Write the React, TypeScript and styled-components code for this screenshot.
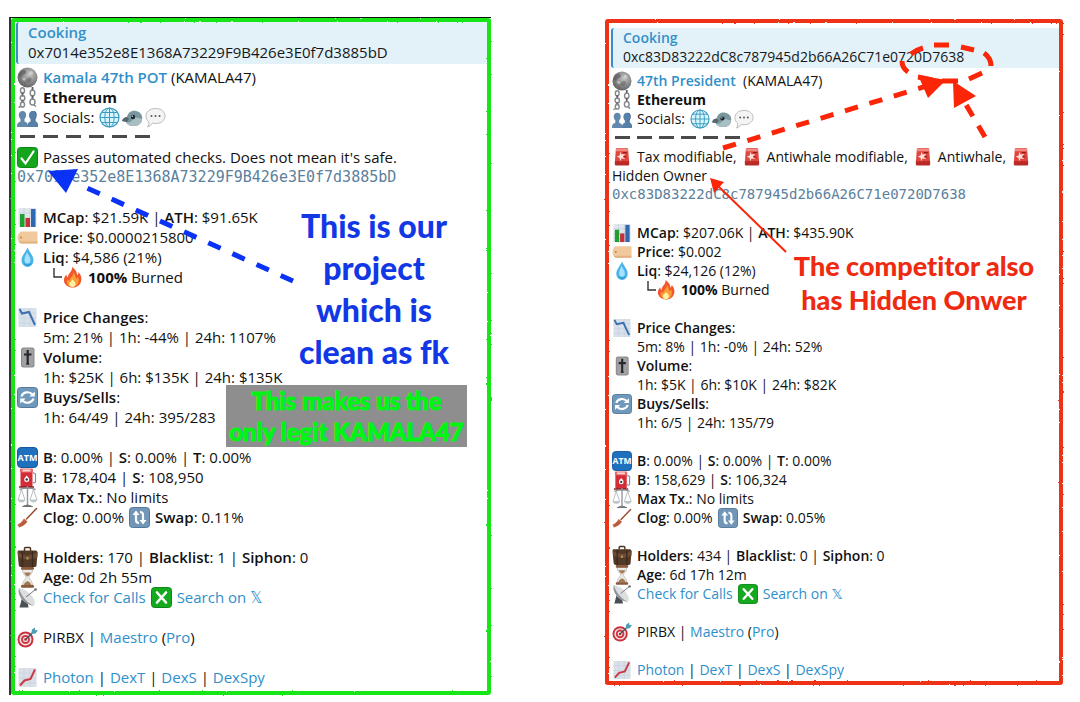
import React from "react";
import styled, { createGlobalStyle, css } from "styled-components";

const Global = createGlobalStyle`
  * { box-sizing: border-box; }
  body { margin: 0; background: #fff; color: #111; font-family: "Open Sans", "Noto Sans", "DejaVu Sans", sans-serif; }
  p, h2 { margin: 0; }
`;

type Size = "large" | "small";

const sizes = {
  large: { font: 15, line: 20, icon: 21 },
  small: { font: 14, line: 19, icon: 20 },
};

const Page = styled.main`
  display: grid;
  grid-template-columns: 482fr 458fr;
  column-gap: 114px;
  align-items: start;
  padding: 17px 17px 6px 9px;
`;

const Panel = styled.article<{ $size: Size }>`
  position: relative;
  font-size: ${(p) => sizes[p.$size].font}px;
  line-height: ${(p) => sizes[p.$size].line}px;
  white-space: nowrap;
  ${(p) =>
    p.$size === "large"
      ? css`
          padding: 4px 4px 8px 7px;
          border-left: 2px solid #333;
          border-top: 1px solid #111;
        `
      : css`
          margin-top: 2px;
          padding: 9px 4px 6px 6px;
        `}
`;

const Frame = styled.div<{ $color: string }>`
  position: absolute;
  inset: 0;
  border: 4px solid ${(p) => p.$color};
  border-radius: 3px;
  filter: url(#rough);
  pointer-events: none;
`;

const Quote = styled.header<{ $size: Size }>`
  margin-left: ${(p) => (p.$size === "large" ? -2 : 0)}px;
  padding: 0 0 2px 10px;
  border-left: 2px solid #3a8cc8;
  border-radius: 3px 0 0 3px;
  background: #e2f2f8;
  color: #16181c;
`;

const QuoteTitle = styled.h2`
  font-size: inherit;
  font-weight: 600;
  color: #3490c8;
`;

const Body = styled.div<{ $size: Size }>`
  display: flex;
  flex-direction: column;
  padding-top: 3px;
  padding-left: ${(p) => (p.$size === "large" ? 0 : 1)}px;
  margin-left: ${(p) => (p.$size === "large" ? -1 : 0)}px;
`;

const Row = styled.div<{ $size: Size; $indent?: boolean; $before?: boolean }>`
  display: flex;
  align-items: center;
  gap: 5px;
  height: ${(p) => sizes[p.$size].line}px;
  margin-top: ${(p) => (p.$before ? sizes[p.$size].line : 0)}px;
  padding-left: ${(p) => (p.$indent ? sizes[p.$size].icon + 5 : 0)}px;
  b { font-weight: 600; }
`;

const Strong = styled.strong`
  font-weight: 700;
`;

const Link = styled.a<{ $bold?: boolean }>`
  color: #2f8fca;
  text-decoration: none;
  font-weight: ${(p) => (p.$bold ? 600 : 400)};
`;

const Hash = styled.code<{ $size: Size }>`
  font-family: "DejaVu Sans Mono", "Liberation Mono", monospace;
  font-size: ${(p) => sizes[p.$size].font}px;
  color: #5b7f9c;
`;

const IconSvg = styled.svg<{ $size: Size }>`
  flex: none;
  display: block;
  width: ${(p) => sizes[p.$size].icon}px;
  height: ${(p) => sizes[p.$size].icon}px;
  overflow: visible;
`;

const Socials = styled.span`
  display: flex;
  gap: 2px;
`;

const Dashes = styled.div<{ $size: Size }>`
  display: flex;
  align-items: center;
  gap: ${(p) => (p.$size === "large" ? 8 : 7)}px;
  height: ${(p) => sizes[p.$size].line}px;
  padding: 0 0 1px 3px;
`;

const Dash = styled.i`
  width: 15px;
  height: 3px;
  background: #4a4a4a;
`;

const Branch = styled.span`
  display: flex;
  align-items: center;
  padding-left: 10px;
`;

const Elbow = styled.svg`
  width: 9px;
  height: 20px;
`;

const Arrows = styled.svg`
  position: absolute;
  left: 0;
  top: 0;
  pointer-events: none;
`;

const Note = styled.p<{ $x: number; $y: number; $w: number; $font: number; $line: number; $color: string; $bg?: string }>`
  position: absolute;
  left: ${(p) => p.$x}px;
  top: ${(p) => p.$y}px;
  width: ${(p) => p.$w}px;
  font-family: Lato, "Open Sans", sans-serif;
  font-weight: 900;
  font-variant-ligatures: none;
  font-size: ${(p) => p.$font}px;
  line-height: ${(p) => p.$line}px;
  text-align: center;
  color: ${(p) => p.$color};
  background: ${(p) => p.$bg ?? "transparent"};
  -webkit-text-stroke: ${(p) => (p.$bg ? 1 : 0)}px ${(p) => p.$color};
`;

const art: Record<string, React.ReactNode> = {
  moon: (
    <>
      <circle cx="10.5" cy="10.5" r="10" fill="url(#moonFill)" />
      <path d="M5 3.500c3-1.500 5 .5 4 2.500s-3 1-4 3-3 1-3.500 0S3 4.500 5 3.500z" fill="#555" opacity=".6" />
      <path d="M11 11c2-1 4 0 3.500 2s-2 3-4 2.500-1.500-3.500.5-4.500zM6 14l3 2-1 2z" fill="#555" opacity=".45" />
      <circle cx="14" cy="6" r="2" fill="#ddd" opacity=".6" />
      <circle cx="7" cy="12" r="1.500" fill="#eee" opacity=".5" />
    </>
  ),
  chains: (
    <g fill="none" stroke="#85898e" strokeWidth="1.500">
      <ellipse cx="5.500" cy="3.500" rx="2" ry="2.800" />
      <path d="M5.500 5.500v4" stroke="#55585c" strokeWidth="1.800" />
      <ellipse cx="5.500" cy="11" rx="2.300" ry="2.600" />
      <path d="M5.500 13v3" stroke="#55585c" strokeWidth="1.800" />
      <ellipse cx="5.500" cy="17.500" rx="2" ry="2.600" />
      <path d="M15.500 0v4" stroke="#55585c" strokeWidth="1.800" />
      <ellipse cx="15.500" cy="6" rx="2.300" ry="3" />
      <path d="M15.500 8.500v4" stroke="#55585c" strokeWidth="1.800" />
      <ellipse cx="15.500" cy="15" rx="2.500" ry="3" />
      <path d="M3.500 19.500l-2 1M17 18l2 1.500" />
    </g>
  ),
  people: (
    <>
      <path d="M11 19c0-3 1-4 3.500-4.500V12c-2-1.500-2.500-8 2-8s3.500 6.500 2 8v2.500c1.500.5 2.500 1.500 2.500 4.500z" fill="#3f6284" />
      <path d="M0 20c0-3 .5-4.500 3.500-5.500V12C1 10 1 4 5.500 4s4.500 6 2 8v2.500c3 1 3.500 2.500 3.500 5.500z" fill="#6288ab" />
      <path d="M10.500 20c0-3 .5-4.500 3-5.500V12c-2.500-2-2-8 2-8s4.500 6 2 8v2.500c2.500 1 3.500 2.500 3.500 5.500z" fill="#5680a8" />
    </>
  ),
  globe: (
    <>
      <circle cx="10.500" cy="10.500" r="9.500" fill="#d9f5fd" stroke="#3c9cc0" strokeWidth="1.200" />
      <g fill="none" stroke="#3c9cc0" strokeWidth="1">
        <ellipse cx="10.500" cy="10.500" rx="4.700" ry="9.500" />
        <path d="M10.500 1v19M1 10.500h19M3 5.500h15M3 15.500h15" />
      </g>
    </>
  ),
  bird: (
    <>
      <path d="M0 14c1-3 3-4 5-4 1-5 5-7 9-6 5 1 7 5 6 9s-4 6-9 6c-4 0-6-2-7-4z" fill="#79979f" />
      <path d="M4 15c4 2 7-2 8-5l8 2c0 5-4 7-9 7-4 0-6-2-7-4z" fill="#a8bfc3" />
      <path d="M0 14c1-3 3-4 5-4l2 2-2 3z" fill="#59666b" />
      <circle cx="11" cy="10" r="2.200" fill="#1c2529" />
      <circle cx="10.300" cy="9.300" r=".7" fill="#fff" />
    </>
  ),
  chat: (
    <>
      <path d="M10.500 1.500C16.500 1.500 20 5 20 9s-3.500 7.500-9.500 7.500c-1 0-2-.1-3-.4C6.500 18 4.500 19.500 2.500 20c1.200-1.200 1.500-3 1.300-5.200C2 13.500 1 11.500 1 9c0-4 3.500-7.500 9.500-7.500z" fill="#f4f4f5" stroke="#b9bbbd" />
      <g fill="#555"><circle cx="6.500" cy="9" r="1" /><circle cx="10.500" cy="9" r="1" /><circle cx="14.500" cy="9" r="1" /></g>
    </>
  ),
  check: (
    <>
      <rect x=".5" y=".5" width="20" height="20" rx="3" fill="#14a51c" stroke="#0a8a14" />
      <path d="M4.500 11.500l4 5L16.500 4.500" fill="none" stroke="#fff" strokeWidth="2.200" strokeLinecap="round" />
    </>
  ),
  cross: (
    <>
      <rect x=".5" y=".5" width="20" height="20" rx="3" fill="#16a81e" stroke="#0a8a14" />
      <path d="M6 5.500l9 10M15 5.500l-9 10" stroke="#fff" strokeWidth="2.600" strokeLinecap="round" />
    </>
  ),
  siren: (
    <>
      <path d="M4 2.500q0-1.500 1.500-1.500h10q1.500 0 1.500 1.500L18 16H3z" fill="#e0453e" />
      <path d="M4.500 1.500h12l.5 3H4z" fill="#ef8d84" />
      <path d="M3 15h15v3q0 1.500-1.500 1.500h-12Q3 19.500 3 18z" fill="#b92a26" />
      <path d="M9 5l1 3 4-1-2.500 3 2.500 2.500-4-.5-1.500 3-.5-3.500L5 10l3-1z" fill="#ffe0d8" />
      <path d="M11.500 6h4M12 10.500h3" stroke="#8f1b1b" strokeWidth="1.300" />
    </>
  ),
  bars: (
    <>
      <rect x="1.500" y="1" width="18" height="19" fill="#dfe6ee" />
      <path d="M1.500 6h18M1.500 11h18M1.500 16h18M7 1v19M13 1v19" stroke="#c3ccd8" strokeWidth=".6" />
      <rect x="3" y="7" width="4.500" height="13" fill="#21a032" />
      <rect x="8.500" y="11" width="4.500" height="9" fill="#c5303a" />
      <rect x="14" y="2" width="4.500" height="18" fill="#2f68b0" />
    </>
  ),
  tag: (
    <>
      <path d="M4 4.500h15.500q1 0 1 1v10q0 1-1 1H4q-3.500-2-3.500-6T4 4.500z" fill="#f1c99c" />
      <path d="M4 16.500h15.500q1 0 1-1v-1H1.500q1 1.500 2.500 2z" fill="#e0b380" />
      <circle cx="4" cy="10.500" r="1.100" fill="#c08a55" />
    </>
  ),
  drop: (
    <>
      <path d="M10.500.5c2 5 6 8 6 13a6 6.500 0 0 1-12 0c0-5 4-8 6-13z" fill="#4bb3e8" />
      <path d="M10 5c1 3 3.500 5 3.500 8a3 3.500 0 0 1-6 0c0-3 1.500-5 2.500-8z" fill="#a6e2fb" />
      <path d="M6 14c.5 4 6 5 8.500 1.500-1 4-7.500 4.500-8.500-1.500z" fill="#1e86c8" />
    </>
  ),
  fire: (
    <>
      <path d="M10 0c4 3 5 5 5 8 1-.5 1.500-1.500 1.500-3C19 8 20 11 19 14.500c-1 4-4.500 6-8.500 6s-8-2.500-8.500-6.500c-.3-3 1-5 2.500-6.500 0 1.500.5 2.500 1.500 3C5.500 6.500 10.500 5 10 0z" fill="#f2582b" />
      <path d="M11.500 5.500c2.500 3 1.500 5 3 6 .8-.5 1-1 1-2 2 3 2 10-5 10.500-5 0-6.500-4.500-5-8 .5 1 1.200 1.500 2 1.500 0-3 4-4 4-8z" fill="#fb9d35" />
      <path d="M10.500 12c.5 2 3.500 2.500 3 5.500-.3 1.500-1.500 2.500-3 2.500s-3.300-1-3.300-3c0-2 2.800-2.500 3.300-5z" fill="#fff0a8" />
    </>
  ),
  down: (
    <>
      <rect x="1.500" y="1" width="18" height="19" fill="#d8e1ea" />
      <path d="M1.500 6h18M1.500 11h18M1.500 16h18M7 1v19M13 1v19" stroke="#c3cdd8" strokeWidth=".5" />
      <path d="M2.500 2l2.500 4.500 7-1.500L18 18" fill="none" stroke="#3c6fae" strokeWidth="2" />
    </>
  ),
  up: (
    <>
      <rect x="1.500" y="1" width="18" height="19" fill="#dae0e8" />
      <path d="M1.500 6h18M1.500 11h18M1.500 16h18M7 1v19M13 1v19" stroke="#c3cdd8" strokeWidth=".5" />
      <path d="M3 18.500l4.500-5 6-1.500L18 2.500" fill="none" stroke="#c93a45" strokeWidth="2" />
    </>
  ),
  volume: (
    <>
      <rect x="4" y=".5" width="13.500" height="20" rx="2.500" fill="#8a8a8c" />
      <rect x="5" y="1.500" width="11.500" height="18" rx="2" fill="#a1a1a3" />
      <path d="M10.700 3v14M7 7.500h7.500" stroke="#26272b" strokeWidth="2.200" />
      <path d="M9.200 17h3" stroke="#26272b" strokeWidth="1.500" />
    </>
  ),
  refresh: (
    <>
      <rect x=".5" y=".5" width="20" height="20" rx="3" fill="#6f98bb" stroke="#54799b" />
      <path d="M4.500 9.500a6.200 5.500 0 0 1 11-2M16.500 11.500a6.200 5.500 0 0 1-11 2" fill="none" stroke="#fff" strokeWidth="2.200" />
      <path d="M17.800 4.500v5h-5.500zM3.200 16.500v-5h5.500z" fill="#fff" />
    </>
  ),
  swap: (
    <>
      <rect x=".5" y=".5" width="20" height="20" rx="3" fill="#7296b7" stroke="#54799b" />
      <path d="M7 6.500v6.500q0 3 3 3M14 14.500V8q0-3-3-3" fill="none" stroke="#fff" strokeWidth="2.200" />
      <path d="M3.500 8L7 3.500 10.500 8zM10.500 13l3.500 4.500 3.500-4.500z" fill="#fff" />
    </>
  ),
  atm: (
    <>
      <rect x=".5" y=".5" width="20" height="20" rx="3.500" fill="#1f70bd" stroke="#15589c" />
      <text x="10.500" y="14" textAnchor="middle" fontFamily="Open Sans, sans-serif" fontWeight="700" fontSize="9" fill="#fff">ATM</text>
    </>
  ),
  pump: (
    <>
      <rect x="3.500" y="2" width="12" height="18" rx="1.500" fill="#d42d38" />
      <rect x="3" y="1.500" width="13" height="4" rx="1" fill="#e9686c" />
      <rect x="5.500" y="2.500" width="8" height="2" fill="#f6d8d4" />
      <path d="M9.700 8.500c1.500 2 2.500 2.500 2.500 4a2.500 2.500 0 0 1-5 0c0-1.500 1-2 2.500-4z" fill="#fff" />
      <circle cx="9.700" cy="12.500" r="1.200" fill="#333" />
      <path d="M16 5.500l2.500 1.500v8q-1 2-2.500 0" fill="none" stroke="#8c8f92" strokeWidth="1.200" />
      <path d="M2 20h15" stroke="#7d2026" strokeWidth="1.500" />
    </>
  ),
  scales: (
    <>
      <path d="M10.500-1v19M2.500 2.500q8-3 16 0" fill="none" stroke="#8e9499" strokeWidth="1.400" />
      <path d="M4.500 2.500L1 13M4.500 2.500L8 13M16.500 2.500L13 13M16.500 2.500L20 13" stroke="#a8adb1" strokeWidth=".8" />
      <path d="M.5 12.500h8q-1 3-4 3t-4-3zM12.500 12.500h8q-1 3-4 3t-4-3z" fill="#bcc5ca" />
      <path d="M5.500 19.500q5-3 10 0z" fill="#6d7378" stroke="#6d7378" />
    </>
  ),
  broom: (
    <>
      <path d="M19.500 1.500L9.500 12" stroke="#9b4b2f" strokeWidth="1.500" strokeLinecap="round" />
      <path d="M7 11.500l3.500 3c-2 3-4.500 5-8.500 6L.5 17.500c3-1 4.500-3 6.500-6z" fill="#c66544" />
      <path d="M3 19l3.500-4.500M5 18.500l3.500-4" stroke="#9c4a30" strokeWidth=".7" />
    </>
  ),
  case: (
    <>
      <path d="M7.500 4V1.500q0-1 1-1h4q1 0 1 1V4" fill="none" stroke="#4b3524" strokeWidth="1.500" />
      <path d="M1.500 3.500h17q2 0 2 2l-1 13q0 1.500-2 1.500H4q-2 0-2.200-1.500L.5 5.500q0-2 1-2z" fill="#523927" />
      <path d="M1 5q9.500 7 19.500 0v5Q10.500 15 1 10z" fill="#6c4c35" />
      <path d="M5.500 4v16M15.500 4v16" stroke="#3a281b" strokeWidth="1.300" />
      <rect x="9.500" y="10" width="2" height="2.500" fill="#b3935a" />
    </>
  ),
  hourglass: (
    <>
      <path d="M5.500 2.500h10c0 5-3.500 6-3.500 8s3.500 3 3.500 8h-10c0-5 3.500-6 3.500-8s-3.500-3-3.500-8z" fill="#eceae6" stroke="#b9b4ac" strokeWidth=".8" />
      <path d="M7 5.500h7q-1 2.500-3.500 4-2.500-1.500-3.500-4zM6.500 18q1-3 4-4 3 1 4 4z" fill="#a27a55" />
      <rect x="4" y="0" width="13" height="2.800" rx="1" fill="#8a5a3c" />
      <rect x="4" y="18" width="13" height="2.800" rx="1" fill="#8a5a3c" />
    </>
  ),
  dish: (
    <>
      <path d="M5 11l-2.500 9.500h9l-1-6z" fill="#4a4f53" />
      <path d="M2 1C-.5 8 6 16.500 16.500 19 21 15 13 3 2 1z" fill="#dcdee0" />
      <path d="M2 1C0 8 6 16.500 16.500 19 9 14.500 4 9 2 1z" fill="#8d9397" />
      <path d="M9 10l9.500-7.500" stroke="#75797d" strokeWidth="1" />
      <circle cx="18.500" cy="2.500" r="1.300" fill="#666b6f" />
    </>
  ),
  target: (
    <>
      <circle cx="8.500" cy="12.500" r="8" fill="#c93340" />
      <circle cx="8.500" cy="12.500" r="6" fill="#f5e9e8" />
      <circle cx="8.500" cy="12.500" r="4.500" fill="#cf3744" />
      <circle cx="8.500" cy="12.500" r="2.500" fill="#f5e9e8" />
      <circle cx="8.500" cy="12.500" r="1.300" fill="#b32432" />
      <path d="M8.500 12.500l8-7.500" stroke="#39505c" strokeWidth="1.300" />
      <path d="M14 7l1-4.500L18 .5v2.500l3 .5-2.500 3z" fill="#4c9fb4" />
    </>
  ),
};

function Icon({ name, size }: { name: string; size: Size }) {
  return (
    <IconSvg $size={size} viewBox="0 0 21 21" aria-hidden="true">
      {art[name]}
    </IconSvg>
  );
}

interface Token {
  size: Size;
  hash: string;
  name: string;
  gap?: string;
  checks: React.ReactNode;
  mcap: string;
  ath: string;
  price: string;
  liq: string;
  changes: string;
  volume: string;
  trades: string;
  maxBuy: string;
  maxSell: string;
  swap: string;
  holders: string;
  blacklist: string;
  age: string;
}

function Report(t: Token) {
  const s = t.size;
  return (
    <>
      <Quote $size={s}>
        <QuoteTitle>Cooking</QuoteTitle>
        <p>{t.hash}</p>
      </Quote>
      <Body $size={s}>
        <Row $size={s}><Icon name="moon" size={s} /><span><Link $bold href="#token">{t.name}</Link>{t.gap} (KAMALA47)</span></Row>
        <Row $size={s}><Icon name="chains" size={s} /><Strong>Ethereum</Strong></Row>
        <Row $size={s}>
          <Icon name="people" size={s} /><span>Socials:</span>
          <Socials><Icon name="globe" size={s} /><Icon name="bird" size={s} /><Icon name="chat" size={s} /></Socials>
        </Row>
        <Dashes $size={s}><Dash /><Dash /><Dash /><Dash /><Dash /><Dash /></Dashes>
        {t.checks}
        <Row $size={s}><Hash $size={s}>{t.hash}</Hash></Row>
        <Row $size={s} $before><Icon name="bars" size={s} /><span><b>MCap</b>: {t.mcap} | <b>ATH</b>: {t.ath}</span></Row>
        <Row $size={s}><Icon name="tag" size={s} /><span><b>Price</b>: {t.price}</span></Row>
        <Row $size={s}><Icon name="drop" size={s} /><span><b>Liq</b>: {t.liq}</span></Row>
        <Row $size={s} $indent>
          <Branch>
            <Elbow viewBox="0 0 9 20" aria-hidden="true"><path d="M1 1v9h8" fill="none" stroke="#333" strokeWidth="1.400" /></Elbow>
            <Icon name="fire" size={s} />
          </Branch>
          <span><Strong>100%</Strong> Burned</span>
        </Row>
        <Row $size={s} $before><Icon name="down" size={s} /><span><b>Price Changes</b>:</span></Row>
        <Row $size={s} $indent>{t.changes}</Row>
        <Row $size={s}><Icon name="volume" size={s} /><span><b>Volume</b>:</span></Row>
        <Row $size={s} $indent>{t.volume}</Row>
        <Row $size={s}><Icon name="refresh" size={s} /><span><b>Buys/Sells</b>:</span></Row>
        <Row $size={s} $indent>{t.trades}</Row>
        <Row $size={s} $before><Icon name="atm" size={s} /><span><b>B</b>: 0.00% | <b>S</b>: 0.00% | <b>T</b>: 0.00%</span></Row>
        <Row $size={s}><Icon name="pump" size={s} /><span><b>B</b>: {t.maxBuy} | <b>S</b>: {t.maxSell}</span></Row>
        <Row $size={s}><Icon name="scales" size={s} /><span><b>Max Tx.</b>: No limits</span></Row>
        <Row $size={s}>
          <Icon name="broom" size={s} /><span><b>Clog</b>: 0.00%</span>
          <Icon name="swap" size={s} /><span><b>Swap</b>: {t.swap}</span>
        </Row>
        <Row $size={s} $before><Icon name="case" size={s} /><span><b>Holders</b>: {t.holders} | <b>Blacklist</b>: {t.blacklist} | <b>Siphon</b>: 0</span></Row>
        <Row $size={s}><Icon name="hourglass" size={s} /><span><b>Age</b>: {t.age}</span></Row>
        <Row $size={s}>
          <Icon name="dish" size={s} /><Link href="#calls">Check for Calls</Link>
          <Icon name="cross" size={s} /><Link href="#search">Search on 𝕏</Link>
        </Row>
        <Row $size={s} $before><Icon name="target" size={s} /><span>PIRBX | <Link href="#maestro">Maestro</Link> (<Link href="#pro">Pro</Link>)</span></Row>
        <Row $size={s} $before>
          <Icon name="up" size={s} />
          <span><Link href="#photon">Photon</Link> | <Link href="#dext">DexT</Link> | <Link href="#dexs">DexS</Link> | <Link href="#dexspy">DexSpy</Link></span>
        </Row>
      </Body>
    </>
  );
}

export default function App() {
  return (
    <>
      <Global />
      <svg width="0" height="0" style={{ position: "absolute" }} aria-hidden="true">
        <defs>
          <filter id="rough" x="-2%" y="-2%" width="104%" height="104%">
            <feTurbulence type="fractalNoise" baseFrequency="0.35" numOctaves="2" seed="4" />
            <feDisplacementMap in="SourceGraphic" scale="2" xChannelSelector="R" yChannelSelector="G" />
          </filter>
          <radialGradient id="moonFill" cx=".6" cy=".35" r=".7">
            <stop offset="0" stopColor="#c4c4c4" />
            <stop offset="1" stopColor="#5c5c5c" />
          </radialGradient>
        </defs>
      </svg>
      <Page>
        <Panel $size="large">
          <Report
            size="large"
            hash="0x7014e352e8E1368A73229F9B426e3E0f7d3885bD"
            name="Kamala 47th POT"
            checks={<Row $size="large"><Icon name="check" size="large" /><span>Passes automated checks. Does not mean it's safe.</span></Row>}
            mcap="$21.59K" ath="$91.65K" price="$0.0000215800" liq="$4,586 (21%)"
            changes="5m: 21% | 1h: -44% | 24h: 1107%"
            volume="1h: $25K | 6h: $135K | 24h: $135K"
            trades="1h: 64/49 | 24h: 395/283"
            maxBuy="178,404" maxSell="108,950" swap="0.11%"
            holders="170" blacklist="1" age="0d 2h 55m"
          />
          <Frame $color="#14e614" />
          <Note $x={268} $y={187} $w={190} $font={32} $line={42} $color="#1238e6">
            This is our<br />project<br />which is<br />clean as fk
          </Note>
          <Note $x={215} $y={367} $w={241} $font={24} $line={31} $color="#00f514" $bg="#8e8e8e">
            This makes us the<br />only legit KAMALA47
          </Note>
          <Arrows width="480" height="677" viewBox="11 18 480 677" aria-hidden="true">
            <path d="M293 281L76 183" stroke="#0a32f5" strokeWidth="5" strokeDasharray="13.500 13" />
            <path d="M48 171L78 169L66 193z" fill="#0a32f5" />
          </Arrows>
        </Panel>
        <Panel $size="small">
          <Report
            size="small"
            hash="0xc83D83222dC8c787945d2b66A26C71e0720D7638"
            name="47th President"
            gap={"\u00a0"}
            checks={
              <>
                <Row $size="small">
                  <Icon name="siren" size="small" /><span>Tax modifiable,</span>
                  <Icon name="siren" size="small" /><span>Antiwhale modifiable,</span>
                  <Icon name="siren" size="small" /><span>Antiwhale,</span>
                  <Icon name="siren" size="small" />
                </Row>
                <Row $size="small">Hidden Owner</Row>
              </>
            }
            mcap="$207.06K" ath="$435.90K" price="$0.002" liq="$24,126 (12%)"
            changes="5m: 8% | 1h: -0% | 24h: 52%"
            volume="1h: $5K | 6h: $10K | 24h: $82K"
            trades="1h: 6/5 | 24h: 135/79"
            maxBuy="158,629" maxSell="106,324" swap="0.05%"
            holders="434" blacklist="0" age="6d 17h 12m"
          />
          <Frame $color="#ee3217" />
          <Note $x={179} $y={230} $w={260} $font={27} $line={34} $color="#ee2a10">
            The competitor also<br />has Hidden Onwer
          </Note>
          <Arrows width="458" height="667" viewBox="605 19 458 667" aria-hidden="true">
            <g fill="none" stroke="#fb2508" strokeWidth="5">
              <path d="M934 45h15M961 47l13 3M984 53q7 5 7 13M982 73l-13 6M958 81h-16M918 77l14 3M908 72q-6-4-6-11M911 54q5-4 12-6" />
              <path d="M723 148L930 85" strokeDasharray="13.500 12" />
              <path d="M985 137L965 103" strokeDasharray="13 11" />
              <path d="M786 252L716 184" strokeWidth="2" />
            </g>
            <path d="M918 75L946 80L928 98zM953 81L976 96L954 108zM710 178L724 182L714 193z" fill="#fb2508" />
          </Arrows>
        </Panel>
      </Page>
    </>
  );
}
